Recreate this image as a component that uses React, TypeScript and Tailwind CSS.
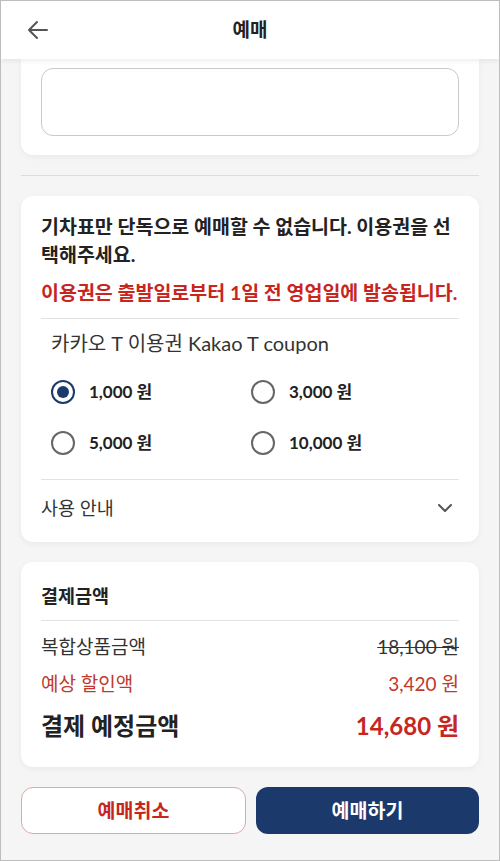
const font = { fontFamily: 'Lato, "Noto Sans CJK KR", sans-serif' };

function Radio({ checked, label }: { checked?: boolean; label: string }) {
  return (
    <div className="flex w-[200px] items-center h-[40px]">
      {checked ? (
        <span className="flex h-[24px] w-[24px] items-center justify-center rounded-full border-[2.5px] border-[#1b3a6b]">
          <span className="h-[12px] w-[12px] rounded-full bg-[#1b3a6b]" />
        </span>
      ) : (
        <span className="h-[24px] w-[24px] rounded-full border-[2px] border-[#666]" />
      )}
      <span className="ml-[14px] text-[17px] font-bold text-[#222]">{label}</span>
    </div>
  );
}

export default function App() {
  return (
    <div
      className="relative flex h-[861px] w-[500px] flex-col overflow-hidden border border-[#bdbdbd] bg-[#f5f5f5]"
      style={font}
    >
      <header className="relative z-10 flex h-[58px] shrink-0 items-center justify-center bg-white shadow-[0_2px_5px_rgba(0,0,0,0.07)]">
        <svg
          className="absolute left-[26px] top-[19px]"
          width="22"
          height="20"
          viewBox="0 0 22 20"
          fill="none"
          stroke="#555"
          strokeWidth="2"
          strokeLinecap="round"
          strokeLinejoin="round"
        >
          <path d="M20 10H2M10 2L2 10l8 8" />
        </svg>
        <h1 className="text-[19px] font-bold text-[#222]">예매</h1>
      </header>

      <main className="flex flex-col px-5">
        <section className="rounded-b-xl bg-white px-5 pb-[19px] pt-[9px] shadow-[0_2px_6px_rgba(0,0,0,0.05)]">
          <div className="h-[68px] rounded-xl border border-[#cacaca]" />
        </section>

        <div className="mt-5 h-px bg-[#dcdcdc]" />

        <section className="mt-5 rounded-xl bg-white px-5 pt-[17px] shadow-[0_2px_6px_rgba(0,0,0,0.05)]">
          <p className="text-[19.5px] font-bold leading-[28px] text-[#222]">
            기차표만 단독으로 예매할 수 없습니다. 이용권을 선택해주세요.
          </p>
          <p className="mt-[10px] text-[19.5px] font-bold leading-[28px] text-[#c8261d]">
            이용권은 출발일로부터 1일 전 영업일에 발송됩니다.
          </p>
          <div className="mt-[11px] h-px bg-[#e2e2e2]" />
          <p className="mt-3 pl-[10px] text-[20px] leading-[24px] text-[#333]">
            카카오 T 이용권 Kakao T coupon
          </p>
          <div className="mt-[17px] flex flex-col gap-[11px] pl-[10px]">
            <div className="flex">
              <Radio checked label="1,000 원" />
              <Radio label="3,000 원" />
            </div>
            <div className="flex">
              <Radio label="5,000 원" />
              <Radio label="10,000 원" />
            </div>
          </div>
          <div className="mt-4 h-px bg-[#e2e2e2]" />
          <div className="flex items-center justify-between pb-[22px] pt-4">
            <span className="text-[18.5px] leading-[24px] text-[#333]">사용 안내</span>
            <svg
              className="mr-[7px]"
              width="14"
              height="8"
              viewBox="0 0 14 8"
              fill="none"
              stroke="#555"
              strokeWidth="2"
              strokeLinecap="round"
              strokeLinejoin="round"
            >
              <path d="M1 1l6 6 6-6" />
            </svg>
          </div>
        </section>

        <section className="mt-5 rounded-xl bg-white px-5 pb-[25px] pt-[22px] shadow-[0_2px_6px_rgba(0,0,0,0.05)]">
          <h2 className="text-[18.5px] font-bold leading-[24px] text-[#222]">결제금액</h2>
          <div className="mt-3 h-px bg-[#e2e2e2]" />
          <div className="mt-[14px] flex justify-between text-[19px] leading-[24px] text-[#333]">
            <span>복합상품금액</span>
            <span className="line-through">18,100 원</span>
          </div>
          <div className="mt-[13px] flex justify-between text-[19px] leading-[24px] text-[#c0392b]">
            <span>예상 할인액</span>
            <span>3,420 원</span>
          </div>
          <div className="mt-[14px] flex items-center justify-between leading-[32px]">
            <span className="text-[24px] font-bold text-[#222]">결제 예정금액</span>
            <span className="text-[24px] font-bold text-[#c8261d]">14,680 원</span>
          </div>
        </section>

        <div className="mt-5 flex gap-[10px]">
          <button className="flex h-[47px] flex-1 items-center justify-center rounded-xl border border-[#d9aaa6] bg-white text-[19.5px] font-bold text-[#c8261d]">
            예매취소
          </button>
          <button className="flex h-[47px] flex-1 items-center justify-center rounded-xl bg-[#1b3a6b] text-[19.5px] font-bold text-white">
            예매하기
          </button>
        </div>
      </main>
    </div>
  );
}
